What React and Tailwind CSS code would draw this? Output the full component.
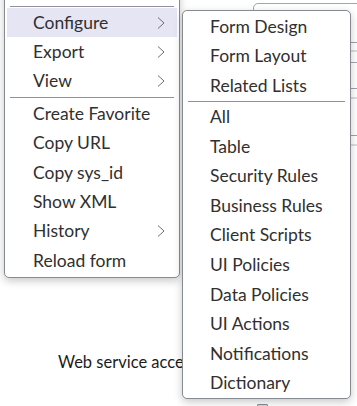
const mainItems = [
  { label: "Configure", sub: true, active: true },
  { label: "Export", sub: true },
  { label: "View", sub: true },
  { divider: true },
  { label: "Create Favorite" },
  { label: "Copy URL" },
  { label: "Copy sys_id" },
  { label: "Show XML" },
  { label: "History", sub: true },
  { label: "Reload form" },
];

const configureItems = [
  "Form Design",
  "Form Layout",
  "Related Lists",
  null,
  "All",
  "Table",
  "Security Rules",
  "Business Rules",
  "Client Scripts",
  "UI Policies",
  "Data Policies",
  "UI Actions",
  "Notifications",
  "Dictionary",
];

function Chevron() {
  return (
    <svg width="8" height="12" viewBox="0 0 8 12" fill="none" className="shrink-0">
      <polyline points="1,0.5 7,6 1,11.5" stroke="#6b6e74" strokeWidth="1" />
    </svg>
  );
}

function Divider({ className = "" }) {
  return (
    <div className={className}>
      <div className="mx-[5px] h-px bg-[#8e9197]" />
    </div>
  );
}

export default function App() {
  return (
    <div className="relative h-[406px] w-[357px] overflow-hidden bg-white font-['Lato','Noto_Sans',sans-serif] text-[17.5px]">
      {/* form behind the menus */}
      <div className="absolute left-[253px] top-[3px] h-[60px] w-[140px] rounded-[5px] border border-[#a3a7ad]" />
      <div className="absolute left-[340px] top-[42px] flex w-[20px] flex-col">
        <div className="h-px bg-[#9ea2a8]" />
        <div className="mt-[7px] h-[2px] bg-[#dcdde0]" />
        <div className="mt-[36px] h-px bg-[#9ea2a8]" />
        <div className="mt-[8px] h-[2px] bg-[#dcdde0]" />
        <div className="mt-[36px] h-px bg-[#9ea2a8]" />
        <div className="mt-[8px] h-[2px] bg-[#dcdde0]" />
      </div>
      <p className="absolute left-[58px] top-[351px] whitespace-nowrap text-[16.5px] leading-[22px] text-[#1b1b1b]">
        Web service access
      </p>
      <div className="absolute left-[257px] top-[404px] h-[4px] w-[11px] rounded-t-[1px] border border-[#8a8d93] bg-[#d6d7da]" />

      {/* context menu */}
      <div className="absolute left-[4px] top-[-20px] w-[176px] rounded-[5px] border border-[#868a91] bg-white pb-[1px] shadow-[0_3px_8px_rgba(0,0,0,0.22)]">
        <div className="h-[25px]" />
        <Divider />
        <div className="h-px" />
        {mainItems.map((item, i) =>
          item.divider ? (
            <Divider key={i} className="py-[1px]" />
          ) : (
            <div
              key={i}
              className={`mx-[2px] flex h-[29.4px] items-center justify-between pl-[26px] pr-[12px] text-[#303030] ${
                item.active ? "bg-[#e5e5f4]" : ""
              }`}
            >
              <span className="whitespace-nowrap">{item.label}</span>
              {item.sub ? <Chevron /> : null}
            </div>
          )
        )}
      </div>

      {/* configure submenu */}
      <div className="absolute left-[182px] top-[10px] w-[169px] rounded-[5px] border border-[#868a91] bg-white pt-[1px] shadow-[0_3px_8px_rgba(0,0,0,0.22)]">
        {configureItems.map((label, i) =>
          label === null ? (
            <Divider key={i} className="py-[0.5px]" />
          ) : (
            <div key={i} className="flex h-[29.55px] items-center pl-[27px] text-[#303030]">
              <span className="whitespace-nowrap">{label}</span>
            </div>
          )
        )}
      </div>
    </div>
  );
}
